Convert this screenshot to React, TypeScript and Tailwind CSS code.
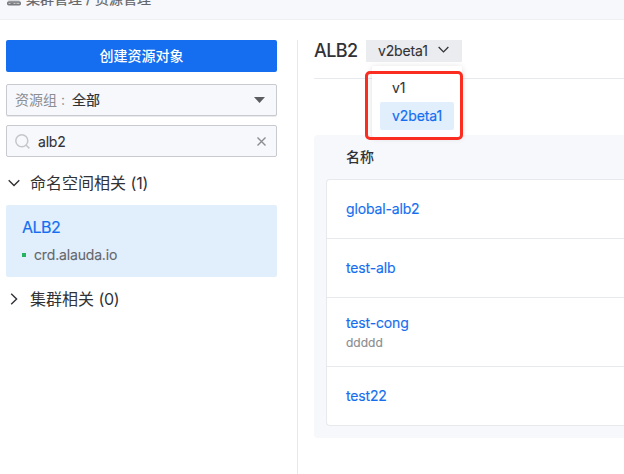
import React from 'react';

const rows = [
  { name: 'global-alb2', height: 'h-[59px]' },
  { name: 'test-alb', height: 'h-[59px]' },
  { name: 'test-cong', note: 'ddddd', height: 'h-[69px]' },
  { name: 'test22', height: 'h-[58px]' },
];

function Chevron({ className = '' }: { className?: string }) {
  return (
    <svg className={className} width="12" height="12" viewBox="0 0 12 12" fill="none" stroke="currentColor" strokeWidth="1.4">
      <path d="M0.7 3.2 6 8.6l5.3-5.4" />
    </svg>
  );
}

function Header() {
  return (
    <header className="h-5 shrink-0 overflow-hidden border-b border-[#eff0f2] bg-[#f7f8fc]">
      <div className="-mt-[11px] flex h-5 items-center pl-[7px] text-[14px] leading-5 text-[#646669]">
        <svg className="mr-[5px] mt-[3px] shrink-0" width="14" height="14" viewBox="0 0 14 14" fill="none" stroke="#77797c">
          <rect x="0.75" y="2" width="12.5" height="3.5" rx="1" strokeWidth="1.3" />
          <rect x="0.75" y="7.9" width="12.5" height="2.9" rx="1" strokeWidth="1.5" fill="#c4c5c8" />
          <path d="M3.5 9.4h3M8.5 9.4h1" />
        </svg>
        <span className="whitespace-pre [-webkit-text-stroke:0.2px]">
          集群管理 / 资源管理
        </span>
      </div>
    </header>
  );
}

function Sidebar() {
  return (
    <aside className="w-[277px] shrink-0 pl-1.5">
      <button className="block h-8 w-full rounded-xs bg-[#146eef] pb-0.5 text-[14px] font-medium text-white">创建资源对象</button>
      <div className="mt-3 flex h-8 items-center rounded-xs border border-[#c9cacf] bg-[#f7f8fc] px-2 text-[14px] shadow-[0_1px_0_#e9eaee]">
        <span className="pb-0.5 text-[#8b8d91]">资源组</span>
        <span className="ml-[4px] w-[11px] pb-px text-[#8b8d91]">:</span>
        <span className="pb-0.5 text-[#313235] [-webkit-text-stroke:0.2px]">全部</span>
        <svg className="ml-auto mr-[3px]" width="11" height="6" viewBox="0 0 11 6">
          <path d="M0 0h11L5.5 6z" fill="#5b5d60" />
        </svg>
      </div>
      <div className="mt-[9px] flex h-8 items-center rounded-xs border border-[#c9cacf] bg-[#f7f8fc] px-2 text-[14px]">
        <svg width="15" height="15" viewBox="0 0 15 15" fill="none" stroke="#c4c6ca" strokeWidth="1.5">
          <circle cx="6.8" cy="6.8" r="6" />
          <path d="m11.2 11.2 3.2 3.2" />
        </svg>
        <span className="ml-2 tracking-[-0.2px] text-[#313235] [-webkit-text-stroke:0.1px]">alb2</span>
        <svg className="ml-auto mr-[2px]" width="9" height="9" viewBox="0 0 9 9" stroke="#8b8d91" strokeWidth="1.4">
          <path d="m0.5 0.5 8 8M8.5 0.5l-8 8" />
        </svg>
      </div>
      <div className="mt-[14px] flex h-6 items-center pl-0.5 text-[16px] text-[#313235]">
        <Chevron className="mr-[10px]" />
        <span>命名空间相关 <span className="tracking-[-0.2px]">(1)</span></span>
      </div>
      <div className="mt-[10px] h-[72px] rounded-xs bg-[#e1effd] pl-4 pt-3">
        <div className="text-[16px] leading-5 tracking-[-0.5px] text-[#146eef] [-webkit-text-stroke:0.2px]">ALB2</div>
        <div className="mt-2 flex items-center text-[14px] leading-5 tracking-[-0.16px] text-[#646669] [-webkit-text-stroke:0.1px]">
          <span className="mr-2 size-1 bg-[#24b35f]" />
          crd.alauda.io
        </div>
      </div>
      <div className="mt-[10px] flex h-6 items-center pl-0.5 text-[16px] text-[#313235]">
        <Chevron className="mr-[10px] -rotate-90" />
        <span>集群相关 <span className="tracking-[-0.3px]">(0)</span></span>
      </div>
    </aside>
  );
}

function VersionPicker() {
  return (
    <div className="relative ml-2">
      <button className="flex h-[22px] w-24 items-center justify-between bg-[#ebecf0] pl-3 pr-[13px] text-[14px] text-[#313235]">
        <span className="pb-0.5 tracking-[-0.15px] [-webkit-text-stroke:0.1px]">v2beta1</span>
        <Chevron className="mb-[3px] size-[11px]" />
      </button>
      <div className="absolute left-[6px] top-[26px] h-[71px] w-[90px] rounded-xs bg-white px-2 pt-2 text-[14px] tracking-[-0.1px] shadow-[0_1px_6px_rgba(0,0,0,0.14)]">
        <div className="flex h-7 items-center pb-0.5 pl-3 text-[#313235] [-webkit-text-stroke:0.1px]">v1</div>
        <div className="flex h-7 w-[74px] items-center rounded-xs bg-[#e1effd] pb-0.5 pl-3 text-[#146eef] [-webkit-text-stroke:0.2px]">v2beta1</div>
      </div>
      <div className="absolute -left-px top-[31px] h-[69px] w-[98px] rounded-[5px] border-3 border-[#fb2d20]" />
    </div>
  );
}

export default function App() {
  return (
    <div
      className="flex h-[474px] w-[624px] flex-col overflow-hidden bg-white"
      style={{ fontFamily: 'Inter, "Noto Sans CJK SC", sans-serif' }}
    >
      <Header />
      <div className="flex min-h-0 flex-1 pt-5">
        <Sidebar />
        <main className="ml-5 min-w-0 flex-1 border-l border-[#e8e9ec] pl-4">
          <div className="flex h-[39px] items-start border-b border-[#e8e9ee]">
            <h1 className="w-[44px] text-[18px] font-medium leading-[21px] tracking-[-0.6px] text-[#313235]">ALB2</h1>
            <VersionPicker />
          </div>
          <section className="mt-14 h-[303px] rounded-l-[4px] bg-[#f7f8fc] pl-3">
            <div className="flex h-11 items-center pb-0.5 pl-5 text-[14px] font-medium text-[#313235]">名称</div>
            <div className="rounded-l-[4px] border-y border-l border-[#e8e9ec] bg-white">
              {rows.map((row, i) => (
                <div
                  key={row.name}
                  className={`${row.height} flex flex-col justify-center pl-[19px] ${i < rows.length - 1 ? 'border-b border-[#e8e9ec]' : ''}`}
                >
                  <span className="text-[14px] leading-5 tracking-[-0.15px] text-[#146eef] [-webkit-text-stroke:0.15px]">{row.name}</span>
                  {row.note && <span className="pt-px text-[12px] leading-[18px] text-[#8b8d91] [-webkit-text-stroke:0.15px]">{row.note}</span>}
                </div>
              ))}
            </div>
          </section>
        </main>
      </div>
    </div>
  );
}
